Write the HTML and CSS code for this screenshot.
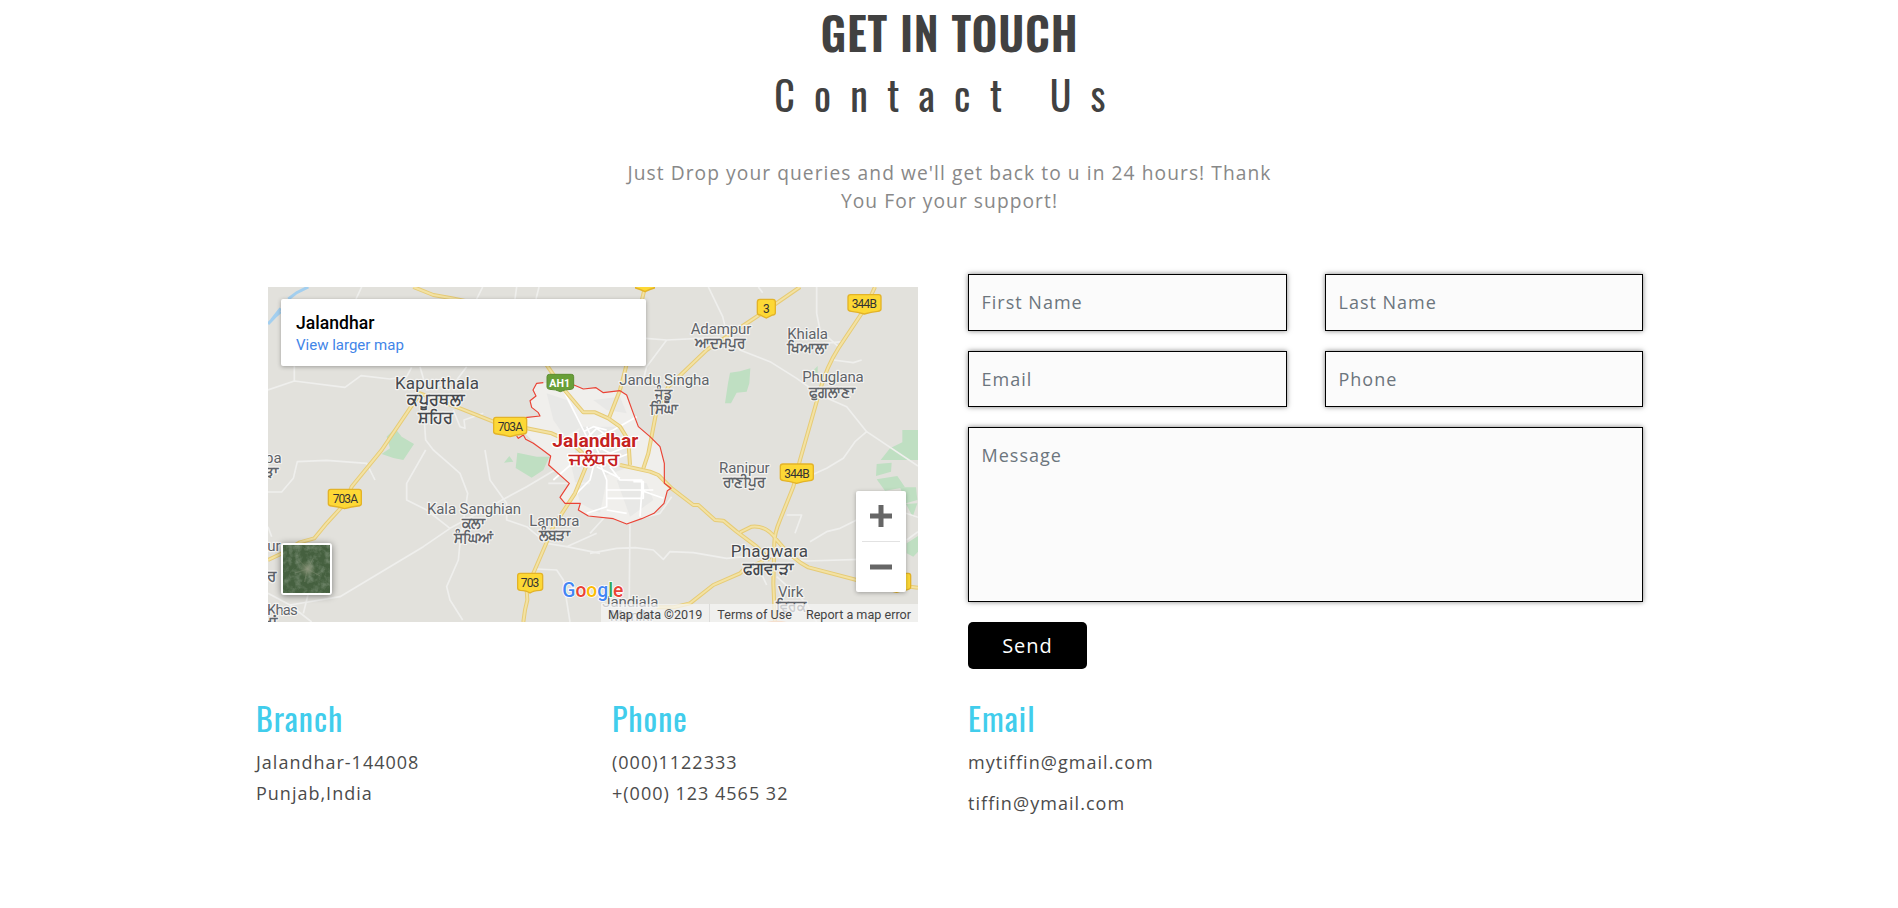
FILE: index.html
```html
<!DOCTYPE html>
<html lang="en">
<head>
<meta charset="utf-8">
<title>Contact Us</title>
<link rel="stylesheet" href="styles.css">
</head>
<body>
<main class="page">
  <header class="intro">
    <h1 class="intro-title">GET IN TOUCH</h1>
    <h2 class="intro-sub">Contact Us</h2>
    <p class="intro-text">Just Drop your queries and we'll get back to u in 24 hours! Thank<br>You For your support!</p>
  </header>

  <section class="main-row">
    <div class="map">
      <svg class="map-art" viewBox="24 21 1950 1005" width="650" height="335">
        <defs>
          <path id="roads" d="M24 840L62 822L120 787L163 775L200 730L255 670L275 620L365 510L460 370L480 340L520 355L600 385L700 425L800 445L875 460L930 485L980 530M460 21L520 45L575 55L700 80M860 255L905 320L970 397H1005L1045 415L1080 440L1105 480L1110 555M1155 21L1098 260L1080 330L1048 412M1620 21L1520 90L1430 150L1340 210L1225 320L1190 390L1165 520L1150 565M1845 21L1815 85L1735 205Q1700 260 1680 330L1620 540L1600 620L1560 720Q1543 760 1543 790L1540 910L1545 1026M1080 555L1170 575L1195 585L1235 625L1300 675H1315L1365 720L1390 722L1430 755L1490 800L1530 840M1440 757L1475 740Q1520 735 1550 780Q1600 840 1645 862L1790 900L1974 923M1510 843L1450 870L1440 880L1360 915L1290 970L1240 982H1190M980 555L945 640L880 740L820 880L800 930L802 960L795 990L790 1026"/>
        </defs>
        <g class="green">
          <path d="M405 445L425 470L462 492L430 540L400 534L365 522L390 505L380 470Z"/>
          <path d="M772 518L830 530H868L850 570L815 593L767 564Z"/><path d="M732 548L748 528L760 545Z"/>
          <path d="M1410 278L1440 274L1471 265L1468 310L1460 335L1430 338L1413 370H1395L1404 310Z"/>
          <path d="M1663 268L1673 258V290L1660 280Z"/>
          <path d="M1927 450H1974V540H1862L1890 505L1927 487Z"/>
          <path d="M1850 552L1895 548L1893 575L1848 588Z"/><path d="M1850 598L1912 588L1935 622L1875 632Z"/>
          <path d="M1920 622L1968 622L1972 660L1938 670Z"/><path d="M1938 672L1972 670L1958 710Z"/>
          <path d="M1940 790L1974 768V815L1960 830L1940 820Z"/>
        </g>
        <path class="city" d="M850 308L830 310L819 330L828 348L810 362L815 382L835 398L840 408L795 413L797 462L820 485L845 508L872 528L866 555L928 610L900 652L915 670H961L955 690L985 708L1060 716L1100 732L1145 716L1182 700L1212 670L1222 632L1233 625L1213 610V550L1200 500L1170 470L1135 440L1120 400L1100 345L1080 332L1030 338L1008 323L970 327L942 315Z"/>
        <g class="blocks">
          <path d="M860 340L920 360L965 440L915 470L880 420Z"/><path d="M1000 360L1080 350L1100 400L1040 390Z"/>
          <path d="M930 540L1010 530L1040 600L1020 700L960 670Z"/><path d="M1070 600L1160 610L1180 660L1110 710Z"/>
          <path d="M960 440L1090 440L1110 560L1000 600L940 540Z"/>
        </g>
        <g class="minor">
          <path d="M24 330L103 303L255 322L303 287L390 297L440 290L455 262"/><path d="M103 303V258M288 57L305 21M650 57L668 21M770 21L765 57M837 21L828 57"/>
          <path d="M488 350L497 480L520 510L560 545L600 580L623 640L600 790L595 840L560 920L570 960L608 1020"/>
          <path d="M580 390L600 440L615 445L612 420L670 400"/><path d="M480 260L500 330L590 300L620 260"/>
          <path d="M24 636H65L100 595L112 545L200 541L320 550L345 600"/>
          <path d="M497 510L440 610L440 660L500 690L570 745"/><path d="M675 510L690 600L740 670V720L800 740L860 790L920 800L1010 760"/>
          <path d="M24 940L90 975L240 950L490 800L570 745L800 620L935 540"/><path d="M145 940L130 1000M90 975L155 1026M24 740L35 770"/>
          <path d="M830 867L890 870L910 900L930 1026"/><path d="M865 610H990M920 800L1020 820M985 710L1020 700"/>
          <path d="M1110 720L1107 1026M990 820L1070 805L1125 803L1180 810L1210 838L1230 815L1300 818L1400 835L1510 825L1640 843L1800 838"/>
          <path d="M1345 21L1388 110L1400 160L1440 210L1530 245L1610 295L1680 345L1760 380L1820 455L1974 558"/>
          <path d="M1157 175L1220 180L1380 172M1220 180L1160 260L1150 300"/><path d="M1670 21V100L1680 150L1735 200M1690 190L1750 185M1720 240L1780 248L1805 240"/>
          <path d="M1820 455L1785 485L1750 535L1700 565L1660 583M1580 705L1625 705L1605 760"/><path d="M1235 650L1200 700L1120 720M990 760L1040 705"/>
          <path d="M1490 850L1520 915M1550 890L1640 970L1670 1026M1650 785L1700 755L1740 745L1790 720M1940 780L1974 755M1938 700L1974 712M1495 21L1508 38"/>
        </g>
        <path class="river" d="M145 21L110 38L85 57M62 95L45 110L24 132M62 85L35 120"/>
        <g class="streets">
          <path d="M905 320L955 420L985 480M1130 410L1060 450L1000 475M955 500L1010 445L1045 470L1020 510M970 455L1000 440L1040 450"/>
          <path d="M1000 560L990 600L940 650M1020 550L1040 600V680L980 700M1050 560L1080 600H1145V640L1140 710M1040 630H1180M1010 560L1080 595M1120 605H1150V655H1040M1140 630L1210 655M1040 690L1100 700M960 530L880 600"/>
          <path d="M960 470L1050 520L1100 500M980 440L1030 550M930 540L1050 480M1030 550L1110 520"/>
        </g>
        <use class="major" href="#roads"/>
        <use class="major-in" href="#roads"/>
        <path class="border" d="M850 308L830 310L819 330L828 348L810 362L815 382L835 398L840 408L795 413M770 468L775 475L790 465L797 478L820 490L845 508L872 528L866 555L928 610L900 652L915 670H961L955 690L985 708L1060 716L1100 732L1145 716L1182 700L1212 670L1222 632L1233 625L1213 610V550L1200 500L1170 470L1135 440L1120 400L1100 345L1080 332L1030 338L1008 323L970 327L942 315"/>
        <g class="shields">
          <path d="M1127 12H1183V24Q1170 28 1155 35Q1140 28 1127 24Z"/>
          <path d="M708 412H793Q800 412 800 419V455Q800 461 790 462Q770 464 750 470Q730 464 711 462Q701 461 701 455V419Q701 412 708 412Z"/>
          <path d="M212 628H297Q304 628 304 635V671Q304 677 294 678Q274 680 254 686Q234 680 215 678Q205 677 205 671V635Q205 628 212 628Z"/>
          <path d="M1772 44H1856Q1863 44 1863 51V87Q1863 93 1853 94Q1833 96 1813 102Q1793 96 1774 94Q1764 93 1764 87V51Q1764 44 1772 44Z"/>
          <path d="M1569 552H1653Q1660 552 1660 559V595Q1660 601 1650 602Q1630 604 1610 610Q1590 604 1571 602Q1561 601 1561 595V559Q1561 552 1569 552Z"/>
          <path d="M1500 58H1538Q1546 58 1546 66V98Q1546 104 1538 105L1519 114L1500 105Q1492 104 1492 98V66Q1492 58 1500 58Z"/>
          <path d="M780 880H841Q848 880 848 887V924Q848 930 840 931Q820 932 810 939Q800 932 781 931Q773 930 773 924V887Q773 880 780 880Z"/>
          <path d="M1880 880H1945Q1952 880 1952 887V922Q1952 929 1930 931L1910 937L1880 930Z"/>
          <path class="tip" d="M1520 1026Q1550 1018 1580 1026Z"/>
        </g>
        <path class="ah" d="M869 283H934Q941 283 941 290V321Q941 327 933 328Q915 328 901 335Q887 328 869 328Q861 327 861 321V290Q861 283 869 283Z"/>
        <g class="shield-text">
          <text x="751" y="453" textLength="76">703A</text><text x="256" y="669" textLength="76">703A</text>
          <text x="1813" y="85" textLength="76">344B</text><text x="1611" y="594" textLength="76">344B</text>
          <text x="1519" y="98">3</text><text x="810" y="922" textLength="56">703</text>
          <text class="ah-text" x="899" y="322" textLength="62" lengthAdjust="spacingAndGlyphs">AH1</text>
        </g>
        <g class="town big">
          <text x="531" y="326" textLength="252">Kapurthala</text><text x="1528" y="830" textLength="232">Phagwara</text>
        </g>
        <g class="pa big">
          <text x="528" y="376" textLength="172" lengthAdjust="spacingAndGlyphs">ਕਪੂਰਥਲਾ</text>
          <text x="527" y="430" textLength="104" lengthAdjust="spacingAndGlyphs">ਸ਼ਹਿਰ</text>
          <text x="1524" y="882" textLength="152" lengthAdjust="spacingAndGlyphs">ਫਗਵਾੜਾ</text>
        </g>
        <g class="town">
          <text x="1383" y="161" textLength="182">Adampur</text><text x="1643" y="177" textLength="122">Khiala</text>
          <text x="1213" y="314" textLength="270">Jandu Singha</text><text x="1719" y="307" textLength="184">Phuglana</text>
          <text x="1453" y="578" textLength="152">Ranipur</text><text x="642" y="702" textLength="282">Kala Sanghian</text>
          <text x="883" y="738" textLength="150">Lambra</text><text x="1592" y="950" textLength="76">Virk</text>
          <text x="1111" y="981" textLength="168">Jandiala</text><text x="1114" y="1023" textLength="130">Maniki</text>
          <text x="67" y="1004" textLength="92">Khas</text><text x="42" y="814">ur</text><text x="40" y="548">pa</text>
        </g>
        <g class="pa">
          <text x="1381" y="204" textLength="150" lengthAdjust="spacingAndGlyphs">ਆਦਮਪੁਰ</text>
          <text x="1641" y="219" textLength="122" lengthAdjust="spacingAndGlyphs">ਖਿਆਲਾ</text>
          <text x="1211" y="358" textLength="50" lengthAdjust="spacingAndGlyphs">ਜੰਡੂ</text>
          <text x="1211" y="402" textLength="82" lengthAdjust="spacingAndGlyphs">ਸਿੰਘਾ</text>
          <text x="1715" y="351" textLength="136" lengthAdjust="spacingAndGlyphs">ਫੁਗਲਾਣਾ</text>
          <text x="1452" y="622" textLength="128" lengthAdjust="spacingAndGlyphs">ਰਾਣੀਪੁਰ</text>
          <text x="640" y="745" textLength="68" lengthAdjust="spacingAndGlyphs">ਕਲਾ</text>
          <text x="640" y="788" textLength="116" lengthAdjust="spacingAndGlyphs">ਸੰਘਿਆਂ</text>
          <text x="882" y="781" textLength="92" lengthAdjust="spacingAndGlyphs">ਲੰਬੜਾ</text>
          <text x="1592" y="992" textLength="90" lengthAdjust="spacingAndGlyphs">ਵਿਰਕ</text>
          <text x="32" y="592">ੜਾ</text><text x="35" y="903">ਰ</text><text x="30" y="1042">ਖਾਂ</text>
        </g>
        <g class="capital">
          <text x="1006" y="500" textLength="258" lengthAdjust="spacingAndGlyphs">Jalandhar</text>
          <text class="capital-pa" x="1003" y="554" textLength="152" lengthAdjust="spacingAndGlyphs">ਜਲੰਧਰ</text>
        </g>
        <text class="google" x="907" y="950" textLength="183" lengthAdjust="spacingAndGlyphs"><tspan fill="#4285f4">G</tspan><tspan fill="#ea4335">o</tspan><tspan fill="#fbbc05">o</tspan><tspan fill="#4285f4">g</tspan><tspan fill="#34a853">l</tspan><tspan fill="#ea4335">e</tspan></text>
      </svg>
      <div class="map-card">
        <div class="map-place">Jalandhar</div>
        <a class="map-link">View larger map</a>
      </div>
      <div class="map-thumb">
        <svg width="47" height="48" viewBox="0 0 48 48" preserveAspectRatio="none">
          <filter id="grain" x="0" y="0" width="100%" height="100%"><feTurbulence type="fractalNoise" baseFrequency=".16" numOctaves="4" seed="6"/><feColorMatrix values="0 0 0 0 .42  0 0 0 0 .5  0 0 0 0 .4  .9 0 0 0 -.36"/></filter>
          <radialGradient id="town"><stop offset="0" stop-color="#9a9f87" stop-opacity=".85"/><stop offset="1" stop-color="#7b8a6b" stop-opacity="0"/></radialGradient>
          <rect width="48" height="48" fill="#45603f"/><rect width="48" height="48" filter="url(#grain)"/>
          <circle cx="25" cy="24" r="9" fill="url(#town)"/><path d="M25 24L16 15M25 24L31 13M25 24L38 31M25 24L22 37M25 24L12 28" stroke="#8d967c" stroke-opacity=".4"/>
        </svg>
      </div>
      <div class="map-zoom">
        <svg width="50" height="50" viewBox="0 0 50 50"><path d="M14 25H36M25 14V36" stroke="#666" stroke-width="5"/></svg>
        <span class="map-zoom-line"></span>
        <svg width="50" height="50" viewBox="0 0 50 50"><path d="M14 25H36" stroke="#666" stroke-width="5"/></svg>
      </div>
      <div class="map-legal"><span>Map data ©2019</span><span>Terms of Use</span><span class="map-report">Report a map error</span></div>
    </div>

    <form class="form">
      <input class="field field-top" placeholder="First Name">
      <input class="field field-top" placeholder="Last Name">
      <input class="field" placeholder="Email">
      <input class="field" placeholder="Phone">
      <textarea class="field field-message" placeholder="Message"></textarea>
      <button class="send" type="button">Send</button>
    </form>
  </section>

  <section class="contacts">
    <div class="contact"><h3>Branch</h3><p>Jalandhar-144008</p><p>Punjab,India</p></div>
    <div class="contact"><h3>Phone</h3><p>(000)1122333</p><p>+(000) 123 4565 32</p></div>
    <div class="contact contact-mail"><h3>Email</h3><p>mytiffin@gmail.com</p><p>tiffin@ymail.com</p></div>
  </section>
</main>
</body>
</html>
```
FILE: styles.css
```css
* { box-sizing: border-box; }
body { margin: 0; background: #fff; font-family: "Open Sans", sans-serif; letter-spacing: 1px; overflow: hidden; }
h1, h2, h3, p { margin: 0; }
.page { width: 1387px; margin-left: 256px; padding-top: 5px; }

.intro { height: 269px; text-align: center; color: #414141; }
.intro-title { font: 600 45px/54px Oswald, sans-serif; letter-spacing: .75px; }
.intro-sub { margin-top: 11px; font: 400 40px/48px Oswald, sans-serif; letter-spacing: 19.2px; }
.intro-text { margin-top: 41px; color: #888; font-size: 19.2px; line-height: 28px; letter-spacing: 1.07px; }

.main-row { display: flex; align-items: flex-start; height: 425px; }
.map { position: relative; width: 650px; height: 335px; margin: 13px 50px 0 12px; overflow: hidden; background: #e2e1dc; font-family: Roboto, sans-serif; letter-spacing: 0; }
.map-art { display: block; }
.green path { fill: #bfdfc2; }
.city { fill: #f0efec; }
.blocks path { fill: #e8e8e6; }
.minor path { fill: none; stroke: #efefed; stroke-width: 5; stroke-linejoin: round; }
.streets path { fill: none; stroke: #fff; stroke-width: 5; stroke-linejoin: round; }
.river { fill: none; stroke: #a3cfef; stroke-width: 9; }
.major { fill: none; stroke: #e6cb76; stroke-width: 12; stroke-linejoin: round; }
.major-in { fill: none; stroke: #f3e2a3; stroke-width: 6; stroke-linejoin: round; }
.border { fill: none; stroke: #ea4335; stroke-width: 3.5; stroke-linejoin: round; }
.shields path { fill: #fdd835; stroke: #e3b328; stroke-width: 4; }
.shields .tip { fill: #f3a66b; stroke: none; }
.ah { fill: #689f38; stroke: #5b8c31; stroke-width: 3; }
.shield-text { font-size: 36px; text-anchor: middle; fill: #333; }
.shield-text .ah-text { fill: #fff; font-weight: 700; font-size: 33px; }
.town, .pa { text-anchor: middle; font-size: 45px; fill: #5f6368; stroke: #f4f4f2; stroke-width: 7; stroke-linejoin: round; paint-order: stroke; }
.town.big { font-size: 51px; fill: #45484d; }
.pa { font-size: 45px; font-weight: 600; }
.pa.big { font-size: 51px; fill: #45484d; }
.capital { text-anchor: middle; font-size: 56px; font-weight: 700; fill: #c5221f; stroke: #fff; stroke-width: 8; stroke-linejoin: round; paint-order: stroke; }
.capital-pa { font-size: 51px; }
.google { font-size: 58px; font-weight: 500; stroke: #fff; stroke-width: 5; paint-order: stroke; }

.map-card { position: absolute; left: 13px; top: 12px; width: 365px; height: 67px; padding: 14px 15px; background: #fff; border-radius: 2px; box-shadow: 0 1px 4px rgba(0,0,0,.3); }
.map-place { font-size: 17.6px; font-weight: 500; line-height: 20px; color: #000; }
.map-link { display: block; margin-top: 2px; font-size: 15px; line-height: 20px; color: #4285e8; }
.map-thumb { position: absolute; left: 13px; top: 256px; width: 51px; height: 52px; border: 2px solid #fff; border-radius: 3px; box-shadow: 0 1px 7px rgba(0,0,0,.45); background: #45603f; }
.map-thumb svg { display: block; }
.map-zoom { position: absolute; left: 588px; top: 204px; width: 50px; height: 101px; display: flex; flex-direction: column; align-items: center; background: #fff; border-radius: 2px; box-shadow: 0 1px 4px rgba(0,0,0,.3); }
.map-zoom-line { width: 38px; height: 1px; background: #e2e2e2; }
.map-legal { position: absolute; right: 0; bottom: 0; height: 18px; display: flex; background: rgba(245,245,245,.72); color: #444; font-size: 12.6px; line-height: 22px; white-space: nowrap; }
.map-legal span { padding: 0 7px; }
.map-legal span + span { border-left: 1px solid #dcdcda; }
.map-legal .map-report { border-left: 0; }

.form { width: 675px; display: grid; grid-template-columns: 319px 318px; column-gap: 38px; grid-template-rows: 57px 56px 175px 47px; row-gap: 20px; }
.field { width: 100%; height: 100%; padding: 0 12.5px; border: 1px solid #000; border-radius: 0; background: #fbfbfb; box-shadow: 0 0 5px rgba(0,0,0,.5); font: 18px/27px "Open Sans", sans-serif; letter-spacing: 1px; outline: 0; }
.field::placeholder { color: #6c757d; opacity: 1; }
.field-top { padding-bottom: 2px; }
.field-message { grid-column: 1 / 3; padding-top: 14px; resize: none; display: block; }
.send { width: 119px; height: 47px; padding: 0; border: 0; border-radius: 5px; background: #000; color: #fff; font: 20px "Open Sans", sans-serif; letter-spacing: 1px; }

.contacts { display: grid; grid-template-columns: 356px 356px 356px; color: #4b4b4b; font-size: 18px; line-height: 31px; }
.contact h3 { margin-bottom: 10px; font: 400 32px/38px Oswald, sans-serif; letter-spacing: 1px; color: #41cdec; }
.contact-mail p { letter-spacing: 1.05px; }
.contact-mail p + p { margin-top: 10px; }
```
